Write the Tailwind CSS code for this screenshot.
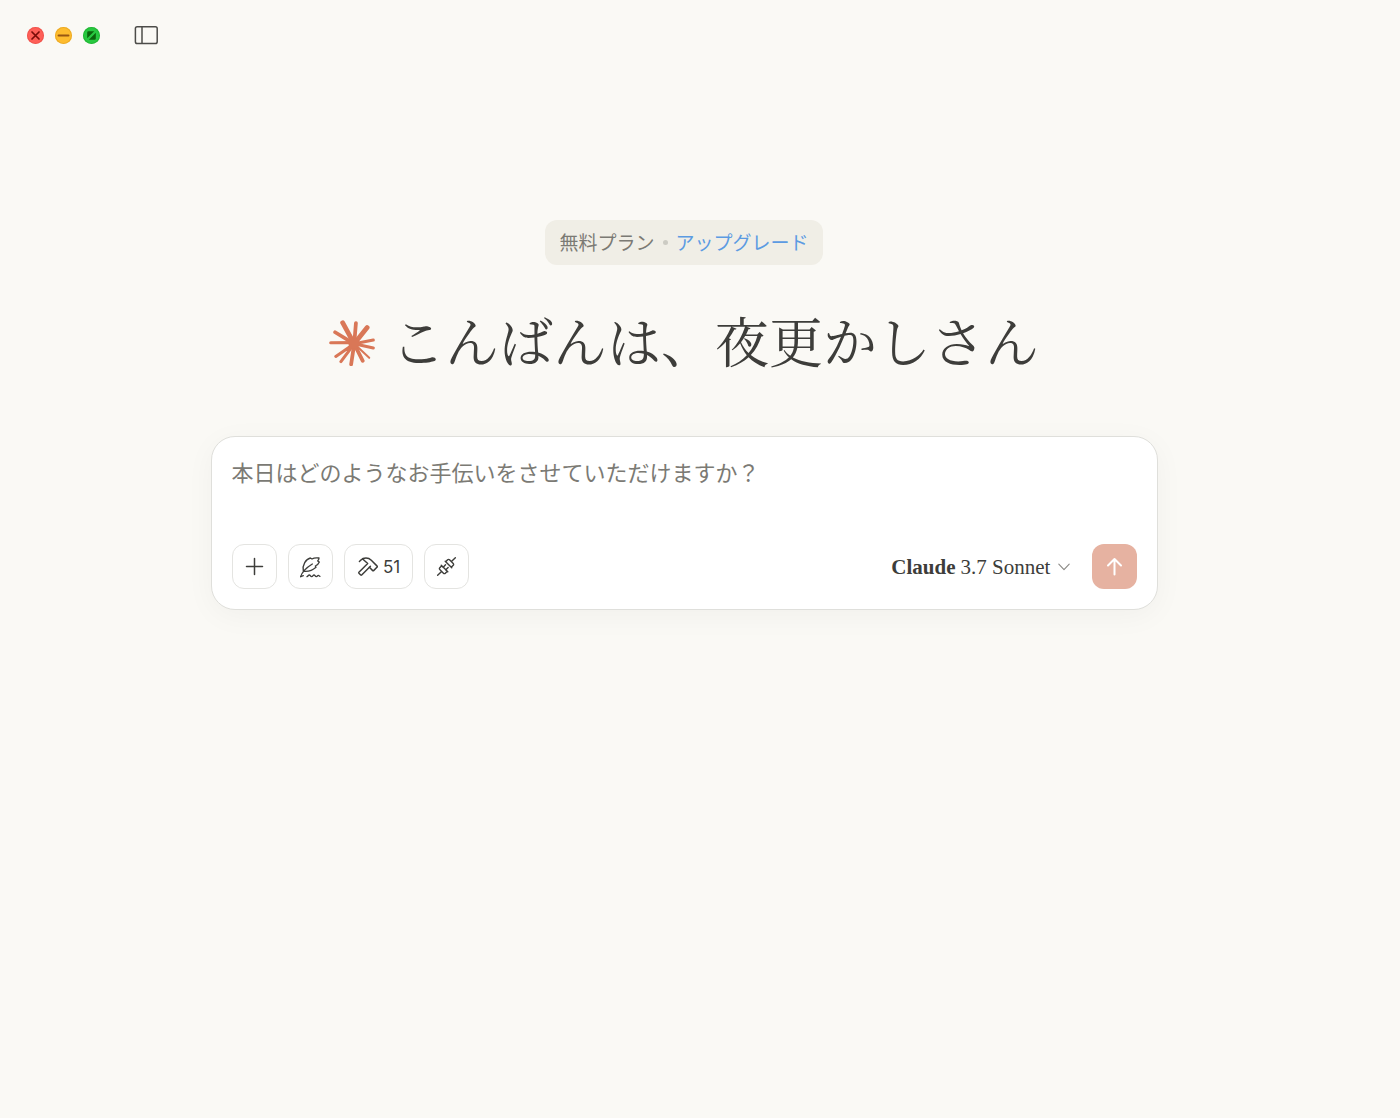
<!DOCTYPE html>
<html lang="ja">
<head>
    <meta charset="UTF-8">
    <meta name="viewport" content="width=device-width, initial-scale=1.0">
    <title>Claude</title>
    <script src="https://cdn.jsdelivr.net/npm/@tailwindcss/browser@4"></script>
</head>
<body class="min-h-screen bg-[#faf9f5] text-[#3d3d3a] font-['Inter','Noto_Sans_CJK_JP',sans-serif]">

    <!-- Window controls -->
    <header class="flex h-[70px] items-center pl-[27px]">
        <div class="flex gap-[11px]">
            <button type="button" aria-label="閉じる" class="size-[17px] rounded-full bg-[#ff5f57] ring-1 ring-inset ring-[#e2463f]/50">
                <svg class="size-[17px]" viewBox="0 0 17 17" fill="none" stroke="#7a0c08" stroke-width="1.7" stroke-linecap="round"><path d="M5 5l7 7M12 5l-7 7"/></svg>
            </button>
            <button type="button" aria-label="最小化" class="size-[17px] rounded-full bg-[#febc2e] ring-1 ring-inset ring-[#e09e1b]/60">
                <svg class="size-[17px]" viewBox="0 0 17 17" fill="none" stroke="#985712" stroke-width="1.9" stroke-linecap="round"><path d="M3.5 8.5h10"/></svg>
            </button>
            <button type="button" aria-label="フルスクリーン" class="size-[17px] rounded-full bg-[#28c840] ring-1 ring-inset ring-[#1aab29]/60">
                <svg class="size-[17px]" viewBox="0 0 17 17" fill="#0b650d"><path d="M4.2 11.2V5.4q0-1.2 1.2-1.2h5.8zM12.8 5.8v5.8q0 1.2-1.2 1.2H5.8z"/></svg>
            </button>
        </div>
        <button type="button" aria-label="サイドバー" class="ml-[34px]">
            <svg class="h-5 w-6" viewBox="0 0 24 20" fill="none" stroke="#4c4c49" stroke-width="1.5"><rect x="1.4" y="1.7" width="21.8" height="16.8" rx="1.8"/><path d="M8 1.7v16.8"/></svg>
        </button>
    </header>

    <main class="flex flex-col items-center pt-[150px] pr-8">
        <!-- Plan -->
        <div class="flex h-[45px] items-center gap-2 rounded-xl bg-[#f0eee6] px-[14px] text-[19px]">
            <span class="pt-[3px] text-[#7b7a74]">無料プラン</span>
            <span class="size-[5px] rounded-full bg-[#cccbc3]"></span>
            <a href="#" class="pt-[3px] text-[#5c9be2]">アップグレード</a>
        </div>

        <!-- Greeting -->
        <div class="mt-[42px] flex items-center gap-4">
            <svg class="size-[46px] shrink-0" viewBox="0 0 135 135" fill="none" stroke="#d97757" stroke-linecap="round">
                <g stroke-width="11">
                    <path d="M74 70L40 8M74 70L112 22" stroke-width="14"/>
                    <path d="M74 70L79 9M74 70L18 36M74 70L65 130M74 70L99 120"/>
                </g>
                <g stroke-width="9">
                    <path d="M74 70L130 59M74 70L130 82M74 66L5 67M74 70L20 107M74 70L35 122"/>
                    <path d="M74 70L118 111" stroke-width="6"/>
                </g>
                <circle cx="73" cy="69" r="16" fill="#d97757" stroke="none"/>
            </svg>
            <h1 class="pb-[6px] font-['Noto_Serif_CJK_JP','Liberation_Serif','Noto_Sans_CJK_JP',serif] text-[54px] leading-[66px]">こんばんは、夜更かしさん</h1>
        </div>

        <!-- Composer -->
        <form class="mt-[57px] w-full max-w-[947px] rounded-3xl border border-[#dfdfdb] bg-white px-5 pt-4 pb-5 shadow-[0_6px_30px_rgba(0,0,0,0.04)]">
            <textarea rows="1" aria-label="メッセージ" placeholder="本日はどのようなお手伝いをさせていただけますか？" class="block h-[91px] w-full resize-none font-['Noto_Sans_CJK_JP',sans-serif] text-[22px] leading-9 outline-none placeholder:text-[#7b7a74]"></textarea>

            <div class="flex items-center gap-[11px]">
                <button type="button" aria-label="追加" class="flex size-[45px] items-center justify-center rounded-xl border border-[#e4e4e1]">
                    <svg class="size-[21px]" viewBox="0 0 21 21" fill="none" stroke="currentColor" stroke-width="1.5" stroke-linecap="round"><path d="M10.5 2.5v16M2.5 10.5h16"/></svg>
                </button>
                <button type="button" aria-label="スタイル" class="flex size-[45px] items-center justify-center rounded-xl border border-[#e4e4e1]">
                    <svg class="size-[22px]" viewBox="0 0 66 66" fill="none" stroke="currentColor" stroke-width="4" stroke-linecap="round" stroke-linejoin="round">
                        <path d="M5 62C9 48 22 35 40 24M13 45C9 27 21 9 34 6l5 3C45 5 52 5 60 6c0 4-2 7-4 9l5 3c-3 7-7 10-12 12l2 4c-9 8-21 13-35 12"/>
                        <path d="M5 62l8-3M24 62c3-1 4-5 7-5s3 5 7 5 4-5 7-5 3 5 7 5 3-4 6-4 2 3 5 3"/>
                    </svg>
                </button>
                <button type="button" aria-label="ツール 51" class="flex h-[45px] w-[69px] items-center justify-center gap-[5px] rounded-xl border border-[#e4e4e1] text-[17px]">
                    <svg class="size-[22px]" viewBox="0 0 256 256" fill="none" stroke="currentColor" stroke-width="17" stroke-linecap="round" stroke-linejoin="round">
                        <path d="M40 64l14-14a88 88 0 0 1 124 0l68 68a8 8 0 0 1 0 11l-41 41a8 8 0 0 1-11 0l-38-38"/>
                        <path d="M78 34l58 54L34 190a8 8 0 0 0 0 11l21 21a8 8 0 0 0 11 0L168 120"/>
                    </svg>
                    <span class="pt-[2px]">51</span>
                </button>
                <button type="button" aria-label="コネクタ" class="flex size-[45px] items-center justify-center rounded-xl border border-[#e4e4e1]">
                    <svg class="size-[21px]" viewBox="0 0 256 256" fill="none" stroke="currentColor" stroke-width="17" stroke-linecap="round" stroke-linejoin="round">
                        <path d="M64 112l80 80M70 118l-24 24a16 16 0 0 0 0 23l45 45a16 16 0 0 0 23 0l24-24M65 191l-45 45"/>
                        <path d="M112 64l80 80M118 70l24-24a16 16 0 0 1 23 0l45 45a16 16 0 0 1 0 23l-24 24M191 65l45-45"/>
                        <path d="M88 136l28-28M120 168l28-28"/>
                    </svg>
                </button>

                <div class="relative ml-auto mr-[11px] flex items-center gap-[5px] font-['Liberation_Serif',serif] text-[21px] leading-7">
                    <label for="model" class="font-bold">Claude</label>
                    <select id="model" class="appearance-none pr-[19px] outline-none">
                        <option>3.7 Sonnet</option>
                    </select>
                    <svg class="pointer-events-none absolute right-0 size-3" viewBox="0 0 12 12" fill="none" stroke="#8a8985" stroke-width="1.1" stroke-linecap="round" stroke-linejoin="round"><path d="M.8 3.2L6 8.6l5.2-5.4"/></svg>
                </div>
                <button type="submit" aria-label="送信" class="flex size-[45px] items-center justify-center rounded-xl bg-[#e6b2a1]">
                    <svg class="size-[21px]" viewBox="0 0 21 21" fill="none" stroke="#fff" stroke-width="2" stroke-linecap="round" stroke-linejoin="round"><path d="M10.5 18.5V3M4 9.5L10.5 3 17 9.5"/></svg>
                </button>
            </div>
        </form>
    </main>
</body>
</html>
